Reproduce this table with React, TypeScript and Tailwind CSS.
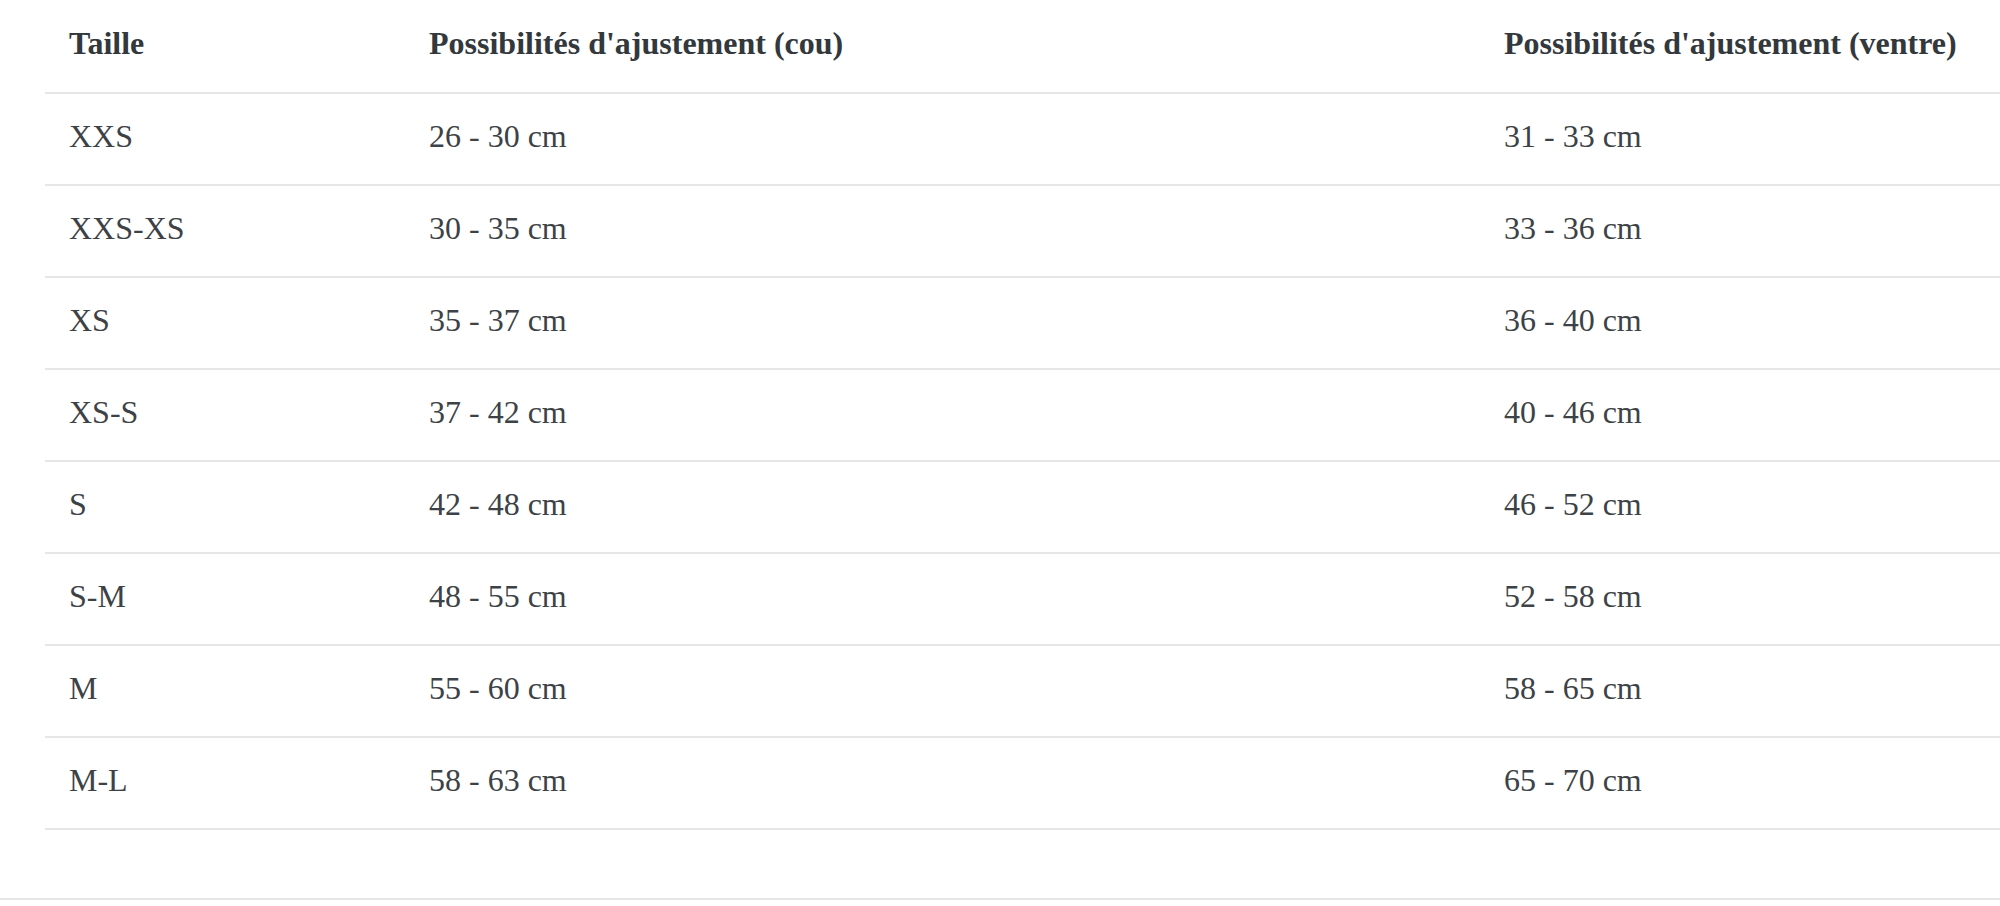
import React from "react";

const rows: [string, string, string][] = [
  ["XXS", "26 - 30 cm", "31 - 33 cm"],
  ["XXS-XS", "30 - 35 cm", "33 - 36 cm"],
  ["XS", "35 - 37 cm", "36 - 40 cm"],
  ["XS-S", "37 - 42 cm", "40 - 46 cm"],
  ["S", "42 - 48 cm", "46 - 52 cm"],
  ["S-M", "48 - 55 cm", "52 - 58 cm"],
  ["M", "55 - 60 cm", "58 - 65 cm"],
  ["M-L", "58 - 63 cm", "65 - 70 cm"],
];

export default function App() {
  return (
    <div
      className="w-[2000px] h-[906px] bg-white overflow-hidden"
      style={{ fontFamily: '"Liberation Serif", "Times New Roman", serif' }}
    >
      <div className="pl-[45px]">
        <div className="grid grid-cols-[360px_1075px_1fr] h-[94px] border-b-2 border-[#e6e6e6] text-[32px] font-bold text-[#33383c]">
          <div className="flex items-center pl-6 pb-[7px]">Taille</div>
          <div className="flex items-center pl-6 pb-[7px]">Possibilités d'ajustement (cou)</div>
          <div className="flex items-center pl-6 pb-[7px] whitespace-nowrap">Possibilités d'ajustement (ventre)</div>
        </div>
        {rows.map((r) => (
          <div
            key={r[0]}
            className="grid grid-cols-[360px_1075px_1fr] h-[92px] border-b-2 border-[#e6e6e6] text-[32px] text-[#3d4246]"
          >
            <div className="flex items-center pl-6 pb-[7px]">{r[0]}</div>
            <div className="flex items-center pl-6 pb-[7px]">{r[1]}</div>
            <div className="flex items-center pl-6 pb-[7px]">{r[2]}</div>
          </div>
        ))}
      </div>
      <div className="h-[68px]" />
      <div className="border-b-2 border-[#e6e6e6]" />
    </div>
  );
}
